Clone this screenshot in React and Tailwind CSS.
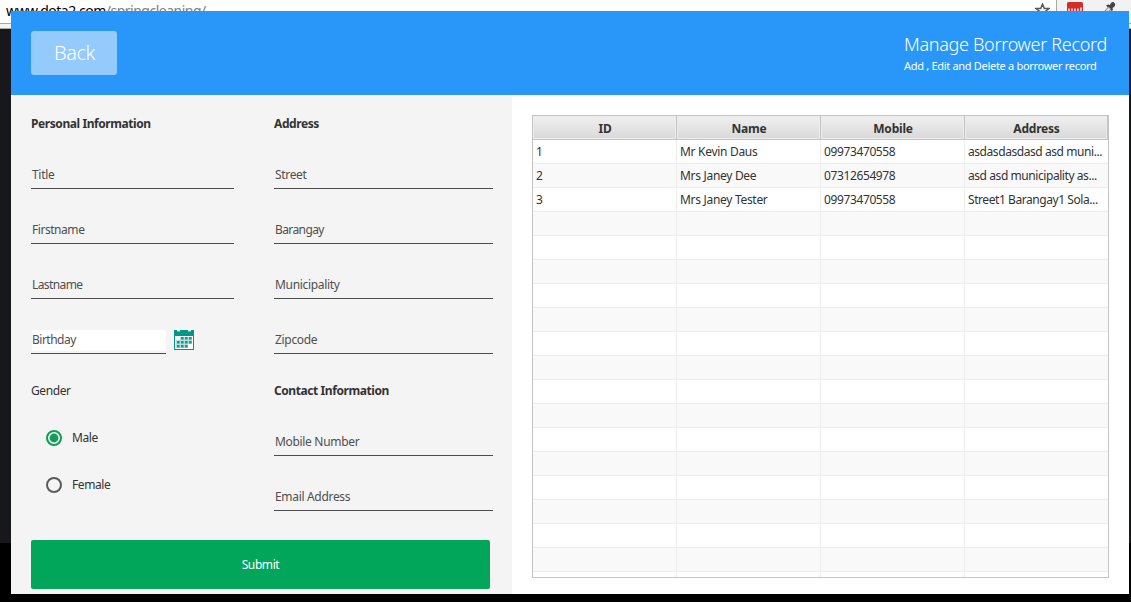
import React from "react";

const rows = [
  ["1", "Mr Kevin Daus", "09973470558", "asdasdasdasd asd muni..."],
  ["2", "Mrs Janey Dee", "07312654978", "asd asd municipality as..."],
  ["3", "Mrs Janey Tester", "09973470558", "Street1 Barangay1 Sola..."],
  ...Array.from({ length: 16 }, () => ["", "", "", ""]),
];

const columnTracking = ["", "tracking-[-0.3px]", "tracking-[-0.38px]", "tracking-[-0.43px]"];

function Field({ label, track = "tracking-[-0.32px]" }) {
  return (
    <div className="flex h-[55px] flex-col justify-end">
      <div className="flex h-[27px] items-center border-b border-[#4d4d4d] pl-px text-[#4f4f4f]">
        <span className={track}>{label}</span>
      </div>
    </div>
  );
}

function Heading({ children }) {
  return <h2 className="h-[19px] text-[12px] leading-[18px] font-bold tracking-[-0.42px] text-[#333]">{children}</h2>;
}

function CalendarIcon() {
  const dots = [
    [7, 7], [11, 7], [15, 7],
    [3, 11], [7, 11], [11, 11], [15, 11],
    [3, 15], [7, 15], [11, 15],
  ];
  return (
    <svg width="20" height="20" viewBox="0 0 20 20">
      <rect width="20" height="20" fill="#009688" />
      <rect x="1" y="6" width="18" height="13" fill="#fff" />
      <path d="M6 7H18V14H14V18H2V10H6Z" fill="#b5deda" />
      <rect x="3" width="3" height="1" fill="#e6f4f3" />
      <rect x="14" width="3" height="1" fill="#e6f4f3" />
      <rect x="3" y="1" width="3" height="1" fill="#5cbab0" />
      <rect x="14" y="1" width="3" height="1" fill="#5cbab0" />
      {dots.map(([x, y]) => (
        <rect key={x + "-" + y} x={x} y={y} width="2.600" height="2.500" fill="#12998c" />
      ))}
    </svg>
  );
}

function Radio({ label, checked }) {
  return (
    <div className="flex h-[47px] items-center gap-[10px] pl-[15px] text-[#333]">
      <svg width="16" height="16" viewBox="0 0 16 16">
        <circle cx="8" cy="8" r="7" fill="none" strokeWidth="2" stroke={checked ? "#0f9d58" : "#5a5a5a"} />
        {checked && <circle cx="8" cy="8" r="4.4" fill="#0f9d58" />}
      </svg>
      <span className="tracking-[-0.4px]">{label}</span>
    </div>
  );
}

function BrowserStrip() {
  return (
    <div className="flex h-[29px] w-full flex-col overflow-hidden">
      <div className="flex h-[23px] shrink-0 overflow-hidden bg-white">
        <div className="flex-1 pl-[6px] text-[14px] leading-[21px] tracking-[-0.5px] text-black">
          www.dota2.com<span className="text-[#808080]">/springcleaning/</span>
        </div>
        <svg className="mr-[6px] mt-[3px]" width="15" height="15" viewBox="0 0 15 15" fill="none" stroke="#5a5a5a" strokeWidth="1.5">
          <path d="M7.5 1L9.3 5.500H14L10.2 8.5L11.6 13.5L7.5 10.4L3.4 13.5L4.8 8.5L1 5.500H5.7Z" />
        </svg>
        <div className="flex w-[75px] gap-[20px] border-l border-[#a8a8a8] bg-[#f2f2f2] pl-[10px] pt-[2px]">
          <svg width="16" height="16" viewBox="0 0 16 16">
            <rect width="16" height="16" rx="1.5" fill="#d32d27" />
            <path d="M2 10V6.5M5 10V6.5M8 10V6.5M11 10V6.5M14 10V5.5" stroke="#fff" strokeWidth="1.3" />
          </svg>
          <svg width="14" height="16" viewBox="0 0 14 16">
            <path d="M3 3.500L5 2.500L7 3L8 1Q10 -1 11.500 1Q13 3 11 5L9.500 6L10 8L8.500 9Z" fill="#444" />
            <path d="M5.500 5L1 10L1 13L4 12L8 7Z" fill="#ddd" stroke="#777" />
          </svg>
        </div>
      </div>
      <div className="h-[6px] shrink-0 border-y border-[#a8a8a8] bg-[#f2f2f2]" />
    </div>
  );
}

export default function App() {
  return (
    <div className="relative flex h-[602px] w-[1131px] flex-col overflow-hidden bg-black font-['Noto_Sans',sans-serif] text-[12px]">
      <BrowserStrip />
      <div className="h-[514px] bg-[#17181c]" />
      <main className="absolute left-[11px] top-[11px] flex h-[583px] w-[1118px] flex-col bg-white">
        <header className="flex h-[84px] shrink-0 items-start justify-between bg-[#2996f9] text-white">
          <button className="ml-5 mt-5 h-[44px] w-[86px] rounded-[3px] bg-[#94cafc] pl-px text-[20px] font-[350] tracking-[-0.5px]">Back</button>
          <div className="mt-[21px] w-[225px]">
            <h1 className="h-[25px] whitespace-nowrap text-[18px] leading-[25px] font-[350] tracking-[-0.3px]">Manage Borrower Record</h1>
            <p className="whitespace-nowrap text-[11px] leading-[18px] tracking-[-0.3px]">Add , Edit and Delete a borrower record</p>
          </div>
        </header>
        <div className="flex min-h-0 flex-1">
          <section className="flex w-[501px] shrink-0 flex-col bg-[#f4f4f4] pl-5 pt-[20px]">
            <div className="flex h-[425px] shrink-0 gap-[40px]">
              <div className="w-[203px]">
                <Heading>Personal Information</Heading>
                <Field label="Title" />
                <Field label="Firstname" track="tracking-[-0.45px]" />
                <Field label="Lastname" track="tracking-[-0.6px]" />
                <div className="flex h-[55px] items-end gap-[8px]">
                  <div className="flex h-[24px] w-[135px] items-center border-b border-[#4d4d4d] bg-white bg-clip-content pb-[2px] pl-px text-[#4f4f4f]">
                    <span className="pb-[2px] tracking-[-0.5px]">Birthday</span>
                  </div>
                  <div className="h-[24px]"><CalendarIcon /></div>
                </div>
                <div className="mt-[28px] h-[18px] leading-[18px] tracking-[-0.4px] text-[#333]">Gender</div>
                <div className="mt-[14px]">
                  <Radio label="Male" checked />
                  <Radio label="Female" />
                </div>
              </div>
              <div className="w-[219px]">
                <Heading>Address</Heading>
                <Field label="Street" />
                <Field label="Barangay" track="tracking-[-0.6px]" />
                <Field label="Municipality" />
                <Field label="Zipcode" />
                <div className="mt-[28px]"><Heading>Contact Information</Heading></div>
                <Field label="Mobile Number" />
                <Field label="Email Address" />
              </div>
            </div>
            <button className="h-[49px] w-[459px] shrink-0 rounded-[2px] bg-[#02a65a] tracking-[-0.4px] text-white">Submit</button>
          </section>
          <section className="px-5 pt-5">
            <div className="h-[463px] w-[577px] overflow-hidden border border-[#c4c4c4]">
              <div className="grid h-[24px] grid-cols-[144px_144px_144px_143px] border-b border-[#c4c4c4]">
                {["ID", "Name", "Mobile", "Address"].map((h) => (
                  <div key={h} className="flex items-center justify-center border-r border-[#c4c4c4] bg-linear-to-b from-[#f0f0f0] to-[#d9d9d9] pt-[2px] pl-px font-bold tracking-[-0.2px] text-[#333] inset-shadow-[0_0_0_1px_#ececec]">
                    {h}
                  </div>
                ))}
              </div>
              {rows.map((r, i) => (
                <div key={i} className="grid h-[24px] grid-cols-[144px_144px_144px_143px] border-b border-[#ededed] odd:bg-[#f9f9f9]">
                  {r.map((c, j) => (
                    <div key={j} className="overflow-hidden border-r border-[#ededed] pl-[3px] leading-[24px] whitespace-nowrap text-[#333] last:border-r-0">
                      <span className={columnTracking[j]}>{c}</span>
                    </div>
                  ))}
                </div>
              ))}
            </div>
          </section>
        </div>
      </main>
    </div>
  );
}
